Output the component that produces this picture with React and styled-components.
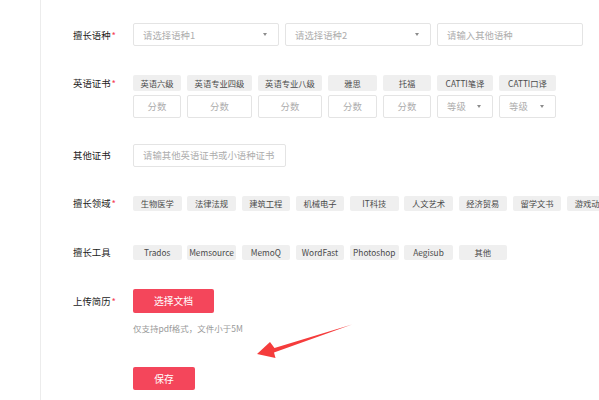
import React from "react";
import styled, { createGlobalStyle } from "styled-components";

const GlobalStyle = createGlobalStyle`
  html, body {
    margin: 0;
    padding: 0;
    background: #fff;
    overflow: hidden;
  }
  body {
    font-family: "Noto Sans CJK SC", "Noto Sans", sans-serif;
    color: #333;
  }
`;

const Page = styled.div`
  position: relative;
  width: 599px;
  height: 400px;
  display: flex;
  overflow: hidden;
`;

const Side = styled.div`
  width: 40px;
  flex-shrink: 0;
`;

const Content = styled.div`
  flex: 1;
  border-left: 1px solid #ececec;
  padding: 23px 0 0 32px;
  display: flex;
  flex-direction: column;
  white-space: nowrap;
`;

const Row = styled.div`
  display: flex;
  align-items: flex-start;
  margin-top: ${(p) => p.$top || 0}px;
`;

const Label = styled.div`
  width: 60px;
  flex-shrink: 0;
  height: ${(p) => p.$h}px;
  display: flex;
  align-items: center;
  font-size: 9.4px;
  color: #222;
`;

const Star = styled.span`
  color: #f4475b;
  margin-left: 1px;
`;

const Fields = styled.div`
  display: flex;
  gap: ${(p) => p.$gap || 6}px;
`;

const Field = styled.div`
  box-sizing: border-box;
  width: ${(p) => p.$w}px;
  height: 23px;
  border: 1px solid #e4e4e4;
  border-radius: 2px;
  background: #fff;
  display: flex;
  align-items: center;
  justify-content: ${(p) => (p.$center ? "center" : "space-between")};
  padding: 0 ${(p) => (p.$center ? 0 : 11)}px 0 ${(p) => (p.$center ? 0 : 9)}px;
  font-size: 9.4px;
  color: #adadad;
`;

const Caret = styled.span`
  width: 0;
  height: 0;
  border-left: 2.5px solid transparent;
  border-right: 2.5px solid transparent;
  border-top: 3px solid #8c8c8c;
`;

const CertGrid = styled.div`
  display: flex;
  gap: 6px;
`;

const CertCol = styled.div`
  display: flex;
  flex-direction: column;
  gap: 4px;
  width: ${(p) => p.$w}px;
`;

const Tag = styled.div`
  box-sizing: border-box;
  width: ${(p) => p.$w}px;
  height: 15.5px;
  border-radius: 2px;
  background: #efefef;
  color: #4a4a4a;
  font-size: 8.3px;
  display: flex;
  align-items: center;
  justify-content: center;
  overflow: hidden;
  flex-shrink: 0;
`;

const Upload = styled.div`
  display: flex;
  flex-direction: column;
  gap: 9px;
`;

const Button = styled.button`
  box-sizing: border-box;
  width: ${(p) => p.$w}px;
  height: ${(p) => p.$h}px;
  border: none;
  border-radius: 2px;
  background: #f4465b;
  color: #fff;
  font-family: inherit;
  font-size: 9.8px;
  padding: 0;
`;

const Hint = styled.div`
  font-size: 8.5px;
  color: #9a9a9a;
`;

const Arrow = styled.svg`
  position: absolute;
  left: 0;
  top: 0;
  pointer-events: none;
`;

const certs = [
  { name: "英语六级", w: 48 },
  { name: "英语专业四级", w: 65 },
  { name: "英语专业八级", w: 64 },
  { name: "雅思", w: 49 },
  { name: "托福", w: 48 },
  { name: "CATTI笔译", w: 56, select: true },
  { name: "CATTI口译", w: 57, select: true },
];

const domains = [
  "生物医学",
  "法律法规",
  "建筑工程",
  "机械电子",
  "IT科技",
  "人文艺术",
  "经济贸易",
  "留学文书",
  "游戏动漫",
];

const tools = ["Trados", "Memsource", "MemoQ", "WordFast", "Photoshop", "Aegisub", "其他"];

const App = () => {
  return (
    <Page>
      <GlobalStyle />
      <Side />
      <Content>
        <Row>
          <Label $h={23}>
            擅长语种<Star>*</Star>
          </Label>
          <Fields>
            <Field $w={146}>
              请选择语种1
              <Caret />
            </Field>
            <Field $w={146}>
              请选择语种2
              <Caret />
            </Field>
            <Field $w={146}>请输入其他语种</Field>
          </Fields>
        </Row>

        <Row $top={29}>
          <Label $h={15.5}>
            英语证书<Star>*</Star>
          </Label>
          <CertGrid>
            {certs.map((c) => (
              <CertCol key={c.name} $w={c.w}>
                <Tag $w={c.w}>{c.name}</Tag>
                {c.select ? (
                  <Field $w={c.w}>
                    等级
                    <Caret />
                  </Field>
                ) : (
                  <Field $w={c.w} $center>
                    分数
                  </Field>
                )}
              </CertCol>
            ))}
          </CertGrid>
        </Row>

        <Row $top={26}>
          <Label $h={23}>其他证书</Label>
          <Field $w={153}>请输其他英语证书或小语种证书</Field>
        </Row>

        <Row $top={29}>
          <Label $h={15.5}>
            擅长领域<Star>*</Star>
          </Label>
          <Fields $gap={5.75}>
            {domains.map((d) => (
              <Tag key={d} $w={48.5}>
                {d}
              </Tag>
            ))}
          </Fields>
        </Row>

        <Row $top={33.5}>
          <Label $h={15.5}>擅长工具</Label>
          <Fields $gap={5.75}>
            {tools.map((t) => (
              <Tag key={t} $w={48.5}>
                {t}
              </Tag>
            ))}
          </Fields>
        </Row>

        <Row $top={29}>
          <Label $h={24}>
            上传简历<Star>*</Star>
          </Label>
          <Upload>
            <Button $w={81} $h={24}>选择文档</Button>
            <Hint>仅支持pdf格式，文件小于5M</Hint>
          </Upload>
        </Row>

        <Row $top={33}>
          <Label $h={23} />
          <Button $w={62} $h={23}>保存</Button>
        </Row>
      </Content>

      <Arrow width="599" height="400" viewBox="0 0 599 400">
        <polygon
          points="352,324.5 274.5,348 270,342 257,354 275.5,358 274,352.5"
          fill="#f53c3c"
        />
      </Arrow>
    </Page>
  );
};

export default App;
